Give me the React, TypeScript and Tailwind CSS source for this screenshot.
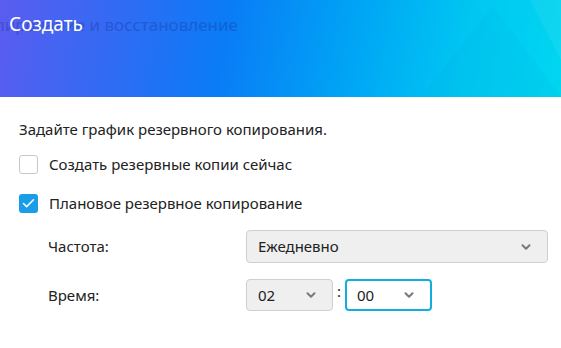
import React from 'react';
import { ChevronDown, Check } from 'lucide-react';

const Select: React.FC<{ value: string; className: string; focused?: boolean }> = ({ value, className, focused }) => (
  <div
    className={`flex items-center justify-between rounded-[4px] pr-[14px] text-[15px] text-[#222] ${
      focused ? 'border-2 border-[#12aee0] bg-white pl-[10px]' : 'border border-[#cfcfcf] bg-[#efefef] pl-[11px]'
    } ${className}`}
  >
    <span>{value}</span>
    <ChevronDown className="h-[14px] w-[14px] text-[#7a7a7a]" strokeWidth={3.5} />
  </div>
);

export default function App() {
  return (
    <div className="h-[348px] w-[561px] overflow-hidden bg-white font-['Noto_Sans',sans-serif]">
      {/* Header */}
      <div className="relative h-[97px] overflow-hidden bg-[linear-gradient(100deg,#5b5cf0_0%,#2f6cf4_22%,#0a7cf6_40%,#00a4f5_62%,#00c6f2_82%,#00d6f0_100%)]">
        <svg className="absolute inset-0 h-full w-full" viewBox="0 0 561 97" preserveAspectRatio="none">
          <polygon points="493,6 420,97 561,97" fill="#0096c8" opacity="0.08" />
          <polygon points="530,0 561,0 561,60" fill="#ffffff" opacity="0.06" />
          <polygon points="472,0 530,0 561,60 561,97 540,97" fill="#00e0ff" opacity="0.06" />
        </svg>
        <span className="absolute right-[323px] top-[13px] whitespace-nowrap text-[17px] leading-[24px] text-[#1a3aa8] opacity-40">
          Резервное копирование и восстановление
        </span>
        <div className="relative px-[9px] pt-[12px] text-[19px] leading-[24px] text-white">Создать</div>
      </div>

      {/* Body */}
      <div className="flex flex-col px-[19px] pt-[22px] text-[15px] text-[#222]">
        <div className="leading-[20px]">Задайте график резервного копирования.</div>

        <label className="mt-[15px] flex items-center gap-[11px] leading-[20px]">
          <span className="h-[19px] w-[19px] rounded-[3px] border border-[#c8c8c8] bg-white" />
          <span>Создать резервные копии сейчас</span>
        </label>

        <label className="mt-[19px] flex items-center gap-[11px] leading-[20px]">
          <span className="flex h-[19px] w-[19px] items-center justify-center rounded-[3px] bg-[#1a9de8]">
            <Check className="h-[15px] w-[15px] text-white" strokeWidth={2.5} />
          </span>
          <span>Плановое резервное копирование</span>
        </label>

        <div className="mt-[17px] grid grid-cols-[198px_1fr] items-center gap-y-[16px] pl-[29px]">
          <span>Частота:</span>
          <Select value="Ежедневно" className="h-[33px] w-[302px]" />
          <span>Время:</span>
          <div className="flex items-center">
            <Select value="02" className="h-[32px] w-[87px]" />
            <span className="mx-[4px] -mt-[8px]">:</span>
            <Select value="00" className="h-[32px] w-[87px]" focused />
          </div>
        </div>
      </div>
    </div>
  );
}
